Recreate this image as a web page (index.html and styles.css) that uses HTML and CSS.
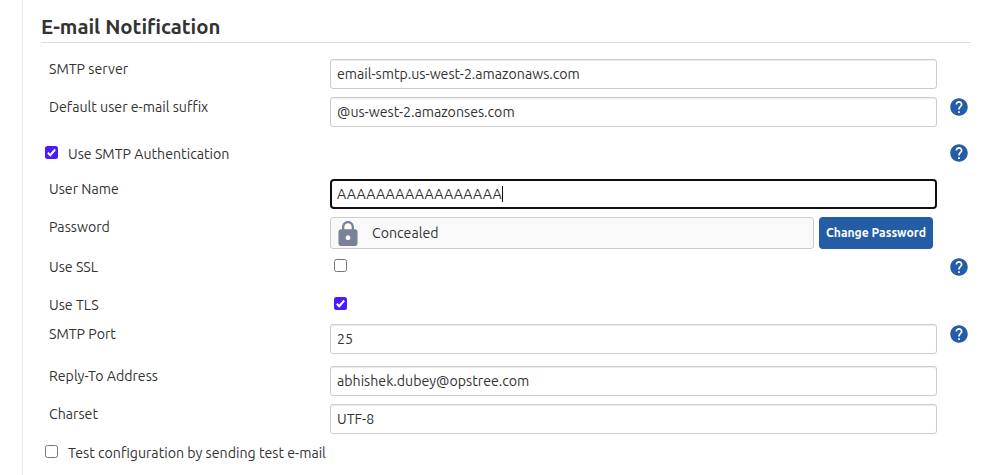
FILE: index.html
```html
<!DOCTYPE html>
<html lang="en">
<head>
<meta charset="utf-8">
<title>E-mail Notification</title>
<link rel="stylesheet" href="styles.css">
</head>
<body>
<svg class="defs" aria-hidden="true">
  <symbol id="help" viewBox="1.700 1.700 20.600 20.600"><path d="M12 2C6.48 2 2 6.48 2 12s4.48 10 10 10 10-4.480 10-10S17.520 2 12 2zm1 17h-2v-2h2v2zm2.070-7.750l-.9.920C13.450 12.900 13 13.500 13 15h-2v-.5c0-1.100.45-2.100 1.170-2.830l1.240-1.260c.37-.36.59-.86.59-1.410 0-1.100-.9-2-2-2s-2 .9-2 2H8c0-2.210 1.790-4 4-4s4 1.790 4 4c0 .88-.36 1.680-.93 2.250z"/></symbol>
</svg>
<main class="config">
  <h1 class="title">E-mail Notification</h1>
  <form>
    <div class="row">
      <label class="name">SMTP server</label>
      <div class="field"><span class="input">email-smtp.us-west-2.amazonaws.com</span></div>
    </div>
    <div class="row">
      <label class="name">Default user e-mail suffix</label>
      <div class="field"><span class="input">@us-west-2.amazonses.com</span></div>
      <svg class="help"><use href="#help"/></svg>
    </div>
    <div class="row row-auth">
      <label class="option"><span class="check on"><svg viewBox="0 0 13 13"><path d="M2.800 6.800 5.200 9.200 10.200 3.500"/></svg></span>Use SMTP Authentication</label>
      <svg class="help"><use href="#help"/></svg>
    </div>
    <div class="row">
      <label class="name">User Name</label>
      <div class="field"><span class="input focused">AAAAAAAAAAAAAAAAA<i class="caret"></i></span></div>
    </div>
    <div class="row row-password">
      <label class="name">Password</label>
      <div class="field secret">
        <span class="concealed"><svg class="lock" viewBox="4 1 16 21"><path d="M18 8h-1V6c0-2.760-2.240-5-5-5S7 3.240 7 6v2H6c-1.100 0-2 .9-2 2v10c0 1.100.9 2 2 2h12c1.100 0 2-.9 2-2V10c0-1.100-.9-2-2-2zm-6 9c-1.100 0-2-.9-2-2s.9-2 2-2 2 .9 2 2-.9 2-2 2zm3.100-9H8.900V6c0-1.710 1.390-3.100 3.100-3.100s3.100 1.390 3.100 3.100v2z"/></svg>Concealed</span>
        <button class="change" type="button">Change Password</button>
      </div>
    </div>
    <div class="row">
      <label class="name">Use SSL</label>
      <div class="field toggle"><span class="check"></span></div>
      <svg class="help"><use href="#help"/></svg>
    </div>
    <div class="row row-tls">
      <label class="name">Use TLS</label>
      <div class="field toggle"><span class="check on"><svg viewBox="0 0 13 13"><path d="M2.800 6.800 5.200 9.200 10.200 3.500"/></svg></span></div>
    </div>
    <div class="row row-port">
      <label class="name">SMTP Port</label>
      <div class="field"><span class="input">25</span></div>
      <svg class="help"><use href="#help"/></svg>
    </div>
    <div class="row">
      <label class="name">Reply-To Address</label>
      <div class="field"><span class="input">abhishek.dubey@opstree.com</span></div>
    </div>
    <div class="row">
      <label class="name">Charset</label>
      <div class="field"><span class="input">UTF-8</span></div>
    </div>
    <div class="row">
      <label class="option"><span class="check"></span>Test configuration by sending test e-mail</label>
    </div>
  </form>
</main>
</body>
</html>
```
FILE: styles.css
```css
* { box-sizing: border-box; }

body {
  margin: 0;
  background: #fff;
  color: #333;
  font: 14.18px/20px Ubuntu, "Noto Sans", sans-serif;
  overflow: hidden;
}

.defs { display: none; }

.config {
  min-height: 475px;
  margin-left: 22px;
  padding: 14px 10px 0 18px;
  border-left: 1px solid #e6eded;
}

.title {
  height: 29px;
  margin: 0 0 16px;
  padding-top: 1px;
  border-bottom: 1px solid #ddd;
  font-size: 20.4px;
  line-height: 24px;
}

.row {
  display: grid;
  grid-template-columns: 289px 607px 34px;
  align-items: start;
  height: 38px;
}
.row-auth { height: 44px; padding-top: 8px; }
.row-password { height: 40px; }
.row-tls { height: 29px; }
.row-port { height: 42px; }

.name { padding-left: 8px; }

.option {
  grid-column: 1 / 3;
  display: flex;
  gap: 10px;
  padding: 1px 0 0 4px;
}
.option .check { margin-top: 2px; }

.input {
  display: flex;
  align-items: center;
  height: 30px;
  padding: 0 6px;
  border: 1px solid #ccc;
  border-radius: 3px;
  box-shadow: inset 0 1px 1px rgba(0, 0, 0, .075);
}
.focused {
  padding: 0 5px;
  border: 2px solid #101010;
  border-radius: 4px;
  box-shadow: none;
  letter-spacing: 0.04px;
}
.caret {
  width: 1px;
  height: 16px;
  background: #111;
}

.secret { display: flex; gap: 5px; }
.concealed {
  display: flex;
  align-items: center;
  gap: 14px;
  width: 484px;
  height: 32px;
  padding-left: 7px;
  border: 1px solid #ccc;
  border-radius: 3px;
  background: #f9f9f9;
}
.lock { width: 20px; height: 25px; fill: #7a8297; }
.change {
  width: 114px;
  height: 32px;
  padding: 0;
  border: 0;
  border-radius: 4px;
  background: #245ca6;
  color: #fff;
  font: bold 12.15px/20px Ubuntu, "Noto Sans", sans-serif;
}

.toggle { padding: 2px 0 0 4px; }
.check {
  display: block;
  flex: none;
  width: 13px;
  height: 13px;
  border: 1px solid #767676;
  border-radius: 2.5px;
}
.check.on { border: 0; background: #4b1aff; }
.check svg {
  display: block;
  fill: none;
  stroke: #fff;
  stroke-width: 2;
}

.help {
  width: 18px;
  height: 18px;
  margin: 1px 0 0 13px;
  fill: #245ca6;
}
```
